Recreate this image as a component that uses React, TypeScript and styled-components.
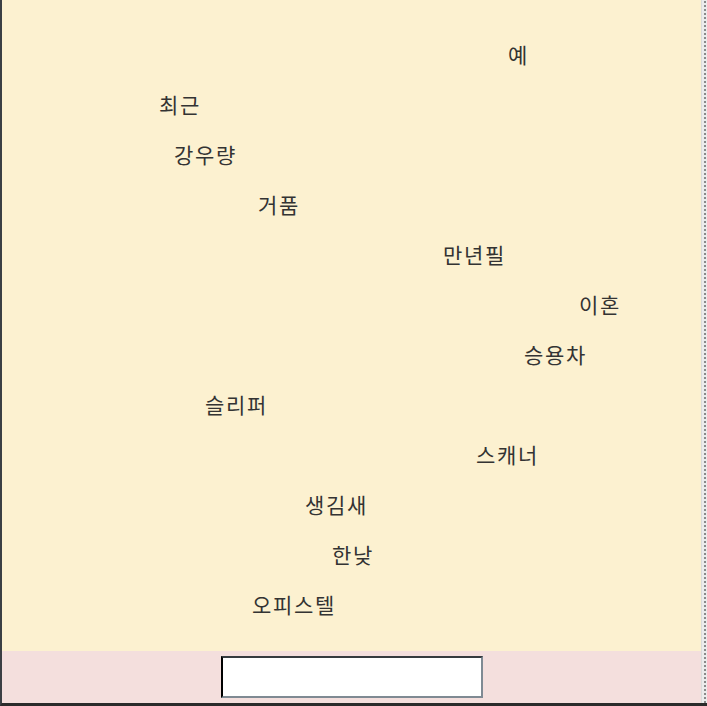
import React from "react";
import styled, { createGlobalStyle } from "styled-components";

const Global = createGlobalStyle`
  html, body {
    margin: 0;
    padding: 0;
    background: #2e2e2e;
  }
  body {
    font-family: "Noto Sans CJK KR", "Noto Sans", sans-serif;
  }
`;

const Frame = styled.div`
  width: 707px;
  height: 706px;
  display: flex;
  box-sizing: border-box;
  border-left: 2px solid #3b3f44;
  border-bottom: 3px solid #2b2b2b;
`;

const Column = styled.div`
  flex: 1;
  display: flex;
  flex-direction: column;
  min-width: 0;
`;

const Field = styled.main`
  flex: 1;
  background: #fcf1d0;
  padding-top: 29px;
  box-sizing: border-box;
`;

const Word = styled.div<{ $indent: number }>`
  height: 50px;
  display: flex;
  align-items: center;
  padding-left: ${(p) => p.$indent}px;
  font-size: 21px;
  letter-spacing: 1.7px;
  line-height: 50px;
  color: #333333;
`;

const Footer = styled.footer`
  height: 52px;
  background: #f4dfdd;
  display: flex;
  align-items: center;
  justify-content: center;
`;

const Input = styled.input`
  width: 262px;
  height: 42px;
  box-sizing: border-box;
  border: 2px inset #7f8a93;
  border-top-color: #7f8a93;
  border-left-color: #3a3a3a;
  background: #ffffff;
  padding: 0 4px;
  font-size: 16px;
  font-family: "Noto Sans CJK KR", sans-serif;
  outline: none;
`;

const Rail = styled.div`
  width: 6px;
  background-color: #ececec;
  background-image: radial-gradient(circle, #8a8a8a 0.9px, transparent 1.1px);
  background-size: 6px 4px;
  background-position: 0 0;
  border-left: 1px solid #dcdcdc;
  box-sizing: border-box;
`;

const words: { text: string; x: number }[] = [
  { text: "예", x: 506 },
  { text: "최근", x: 157 },
  { text: "강우량", x: 172 },
  { text: "거품", x: 256 },
  { text: "만년필", x: 441 },
  { text: "이혼", x: 577 },
  { text: "승용차", x: 522 },
  { text: "슬리퍼", x: 203 },
  { text: "스캐너", x: 474 },
  { text: "생김새", x: 303 },
  { text: "한낮", x: 330 },
  { text: "오피스텔", x: 250 },
];

export default function App() {
  return (
    <>
      <Global />
      <Frame>
        <Column>
          <Field>
            {words.map((w) => (
              <Word key={w.text} $indent={w.x}>
                {w.text}
              </Word>
            ))}
          </Field>
          <Footer>
            <Input type="text" />
          </Footer>
        </Column>
        <Rail />
      </Frame>
    </>
  );
}
